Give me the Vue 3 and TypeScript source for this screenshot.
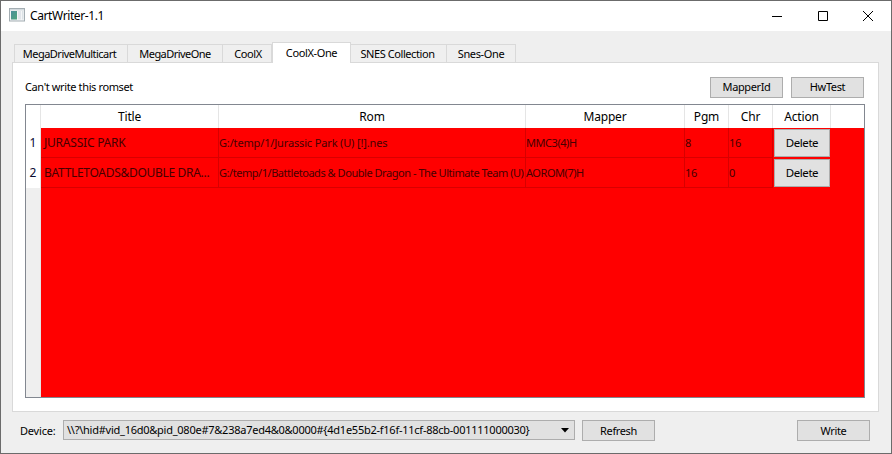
<script setup lang="ts">
import { ref } from 'vue'

interface Rom {
  title: string
  rom: string
  mapper: string
  pgm: number
  chr: number
}

const tabs = [
  { label: 'MegaDriveMulticart', cls: 't-multi' },
  { label: 'MegaDriveOne', cls: 't-mdone' },
  { label: 'CoolX', cls: 't-coolx' },
  { label: 'CoolX-One', cls: 't-coolxone' },
  { label: 'SNES Collection', cls: 't-snes' },
  { label: 'Snes-One', cls: 't-snesone' },
]
const active = ref(3)
const columns = ['Title', 'Rom', 'Mapper', 'Pgm', 'Chr', 'Action', '']
const roms = ref<Rom[]>([
  { title: 'JURASSIC PARK', rom: 'G:/temp/1/Jurassic Park (U) [!].nes', mapper: 'MMC3(4)H', pgm: 8, chr: 16 },
  { title: 'BATTLETOADS&DOUBLE DRA...', rom: 'G:/temp/1/Battletoads & Double Dragon - The Ultimate Team (U)', mapper: 'AOROM(7)H', pgm: 16, chr: 0 },
])
const device = '\\\\?\\hid#vid_16d0&pid_080e#7&238a7ed4&0&0000#{4d1e55b2-f16f-11cf-88cb-001111000030}'
</script>

<template>
  <div class="window">
    <header class="titlebar">
      <svg class="app-icon" width="16" height="14" viewBox="0 0 16 14">
        <defs>
          <linearGradient id="pane" x1="0" y1="0" x2="1" y2="1">
            <stop offset="0" stop-color="#4a8f9b" />
            <stop offset="1" stop-color="#4fa57c" />
          </linearGradient>
        </defs>
        <rect x="0.5" y="0.5" width="15" height="12.5" fill="#f4f6f7" stroke="#a3adb2" />
        <rect x="1" y="1" width="14" height="1.5" fill="#d3dade" />
        <rect x="2" y="3" width="6" height="8.5" fill="url(#pane)" />
        <rect x="9" y="3" width="3" height="8.5" fill="#e1e5ea" />
        <rect x="13" y="3" width="1.5" height="8.5" fill="#dce2e6" />
      </svg>
      <span class="app-name">CartWriter-1.1</span>
      <div class="controls">
        <svg width="10" height="10" viewBox="0 0 10 10"><path d="M0 5.5H10" /></svg>
        <svg width="10" height="10" viewBox="0 0 10 10"><path d="M.5 .5H9.5V9.5H.5Z" /></svg>
        <svg width="10" height="10" viewBox="0 0 10 10"><path d="M0 0L10 10M10 0L0 10" /></svg>
      </div>
    </header>

    <nav class="tabs">
      <button
        v-for="(t, i) in tabs"
        :key="t.label"
        class="tab"
        :class="[t.cls, { active: active === i }]"
        @click="active = i"
      ><span>{{ t.label }}</span></button>
    </nav>

    <main class="pane">
      <div class="toolbar">
        <span class="status">Can't write this romset</span>
        <button class="btn">MapperId</button>
        <button class="btn">HwTest</button>
      </div>
      <div class="table">
        <div class="row head">
          <div class="num"></div>
          <div v-for="c in columns" :key="c" class="cell">{{ c }}</div>
        </div>
        <div v-for="(r, i) in roms" :key="r.title" class="row" :class="{ long: r.rom.length > 50 }">
          <div class="num">{{ i + 1 }}</div>
          <div class="cell title">{{ r.title }}</div>
          <div class="cell rom">{{ r.rom }}</div>
          <div class="cell mapper">{{ r.mapper }}</div>
          <div class="cell">{{ r.pgm }}</div>
          <div class="cell">{{ r.chr }}</div>
          <div class="cell action"><button class="btn delete">Delete</button></div>
          <div class="rest"></div>
        </div>
        <div class="blank"><div></div></div>
      </div>
    </main>

    <footer class="footer">
      <span class="device">Device:</span>
      <div class="combo">
        <span>{{ device }}</span>
        <svg width="8" height="5" viewBox="0 0 8 5"><path d="M0 0H8L4 4.5Z" /></svg>
      </div>
      <button class="btn refresh">Refresh</button>
      <button class="btn write">Write</button>
    </footer>
  </div>
</template>

<style>
body { margin: 0; overflow: hidden; }
</style>

<style scoped>
* { box-sizing: border-box; }
.window {
  width: 892px; height: 454px; border: 1px solid #6b6b6b; background: #efefef;
  display: flex; flex-direction: column; color: #000; white-space: nowrap;
  font: 11px/14px "Noto Sans", "Open Sans", sans-serif; letter-spacing: -0.38px;
}
button { font: inherit; letter-spacing: inherit; color: inherit; padding: 0; }
.titlebar { height: 30px; background: #fff; display: flex; align-items: center; padding: 0 18px 0 8px; flex: none; }
.app-icon { display: block; margin-top: -2px; }
.app-name { margin-left: 5px; font-size: 12px; letter-spacing: -0.4px; }
.controls { margin-left: auto; display: flex; gap: 35.5px; margin-top: -1px; }
.controls svg { display: block; fill: none; stroke: #000; stroke-width: 1; }
.tabs { height: 31px; padding-left: 13px; display: flex; align-items: flex-end; flex: none; }
.tab {
  height: 18px; background: #efefef; border: 1px solid #d9d9d9; border-width: 1px 1px 0 0;
  display: flex; align-items: center; justify-content: center;
}
.tab:first-child { border-left-width: 1px; }
.tab.active { height: 21px; margin-bottom: -1px; background: #fff; border-left-width: 1px; position: relative; }
.t-multi { width: 114px; letter-spacing: -0.52px; padding-right: 3px; }
.t-mdone { width: 95px; letter-spacing: -0.55px; }
.t-coolx { width: 49px; padding-left: 2px; }
.t-coolxone { width: 79px; }
.t-snes { width: 96px; letter-spacing: -0.42px; padding-right: 2px; }
.t-snesone { width: 69px; }
.pane {
  margin-left: 11px; width: 867px; height: 350px; flex: none; background: #fff;
  border: 1px solid #d9d9d9; padding: 13px 14px 13px 12px;
}
.toolbar { display: flex; align-items: center; gap: 8px; height: 22px; }
.status { margin-right: auto; }
.btn {
  width: 73px; height: 21px; flex: none; background: #e1e1e1; border: 1px solid #adadad;
  display: flex; align-items: center; justify-content: center;
}
.table { margin-top: 6px; width: 840px; height: 294px; border: 1px solid #828790; display: flex; flex-direction: column; }
.row {
  display: grid; grid-template-columns: 15px 178px 307px 159px 44px 44px 58px 1fr;
  height: 30px; flex: none; background: #f00;
}
.num {
  background: #fff; border-right: 1px solid #e5e5e5; font-size: 12px;
  display: flex; align-items: center; justify-content: center; letter-spacing: 0; color: #0a0a30;
}
.cell { border: 0 solid #d80000; border-width: 0 1px 1px 0; line-height: 29px; overflow: hidden; color: #460000; min-width: 0; }
.title { font-size: 12px; padding-left: 3px; letter-spacing: -0.22px; }
.rom { letter-spacing: -0.15px; }
.long .rom { letter-spacing: -0.46px; }
.long .title { letter-spacing: -0.3px; }
.mapper { letter-spacing: -0.45px; }
.head { height: 23px; background: #fff; }
.head .cell {
  border-color: #e5e5e5; border-bottom: 0; text-align: center; color: #000;
  font-size: 12px; line-height: 24px; letter-spacing: -0.2px;
}
.head .cell:last-child { border: 0; }
.action { padding: 1px 0 1px 1px; border-color: #f00; }
.delete { width: 56px; height: 28px; color: #000; font-size: 11.5px; letter-spacing: -0.45px; line-height: 14px; }
.blank { flex: 1; background: #f00; }
.blank div { width: 15px; height: 100%; background: #efefef; border-right: 1px solid #e5e5e5; }
.footer { display: flex; padding: 8px 21px 0 19px; align-items: flex-start; }
.device { line-height: 22px; width: 43px; letter-spacing: -0.2px; }
.combo {
  width: 512px; height: 20px; background: #e1e1e1; border: 1px solid #adadad;
  display: flex; align-items: center; justify-content: space-between; padding: 0 5px 0 3px; letter-spacing: -0.25px;
}
.combo svg { display: block; fill: #000; }
.refresh { margin-left: 7px; }
.write { margin-left: auto; }
</style>
